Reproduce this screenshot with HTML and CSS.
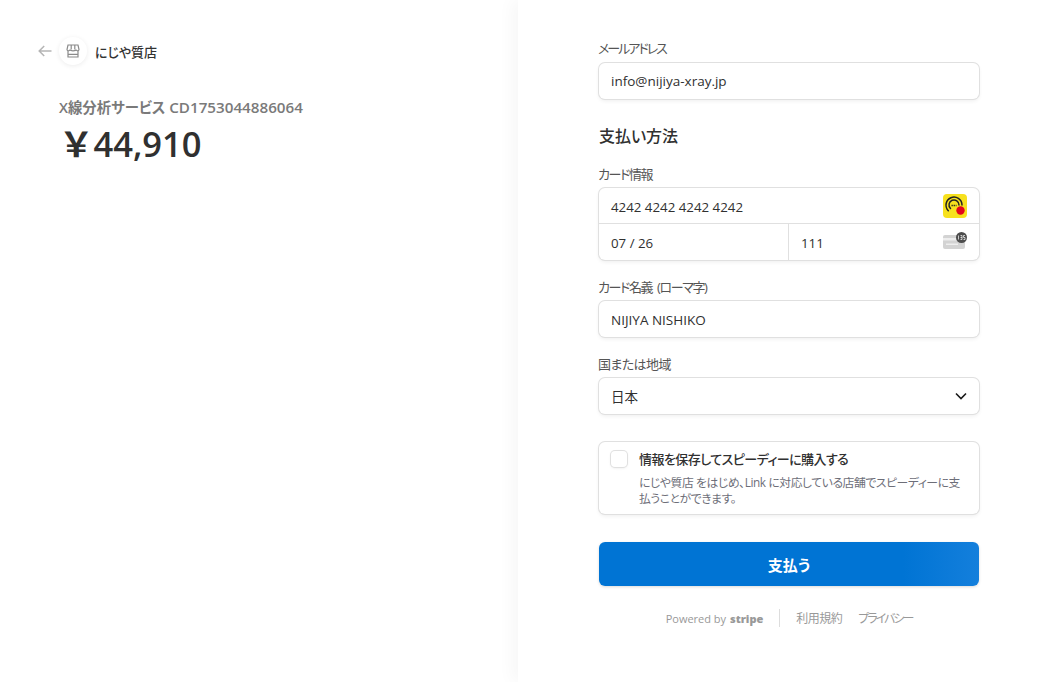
FILE: index.html
```html
<!DOCTYPE html>
<html lang="ja">
<head>
    <meta charset="UTF-8">
    <title>にじや質店</title>
    <link rel="stylesheet" href="styles.css">
</head>
<body>

    <div class="page">
        <!-- Order summary -->
        <div class="summary">
            <div class="merchant">
                <svg class="back" width="14" height="12" viewBox="0 0 14 12" fill="none" stroke="#b5b5b5" stroke-width="1.5">
                    <path d="M13.5 6H1.5M6.2 1L1.2 6l5 5"/>
                </svg>
                <div class="merchant-icon">
                    <svg width="14" height="14" viewBox="0 0 14 14" fill="none" stroke="#8a8a8a" stroke-width="1.2">
                        <path d="M2 1h10l1 4.500c0 1.600-2.700 1.800-3 0 0 1.800-6 1.800-6 0-.3 1.800-3 1.600-3 0z"/>
                        <path d="M5.200 1v4.500M8.800 1v4.500"/>
                        <path d="M2 7v6h10V7M2 10.300h10"/>
                    </svg>
                </div>
                <span class="merchant-name">にじや質店</span>
            </div>
            <div class="product">X線分析サービス <span class="product-code">CD1753044886064</span></div>
            <div class="price">￥44,910</div>
        </div>

        <!-- Payment form -->
        <div class="pay">
            <label class="label label-email">メールアドレス</label>
            <div class="input">info@nijiya-xray.jp</div>

            <h2 class="section-title">支払い方法</h2>

            <label class="label label-next label-kana">カード情報</label>
            <div class="card-box">
                <div class="card-number">
                    <span>4242 4242 4242 4242</span>
                    <svg class="brand" width="24" height="24" viewBox="0 0 24 24">
                        <rect width="24" height="24" rx="4" fill="#f7e11e"/>
                        <g fill="none" stroke="#222" stroke-width="1.500" stroke-linecap="round">
                            <path d="M5.300 16.700A8 8 0 1 1 19 11"/>
                            <path d="M7.500 14.500A5 5 0 1 1 16 11"/>
                        </g>
                        <path d="M8.500 11.500h5" stroke="#222" stroke-width="1.500" stroke-dasharray="1.300 .8"/>
                        <circle cx="17.500" cy="16.500" r="4.200" fill="#e3051b"/>
                    </svg>
                </div>
                <div class="card-row">
                    <div class="card-cell">07 / 26</div>
                    <div class="card-cell card-cvc">
                        <span>111</span>
                        <svg class="cvc-icon" width="24" height="17" viewBox="0 0 24 17">
                            <rect y="3" width="22" height="14" rx="2" fill="#d3d3d3"/>
                            <rect y="6" width="22" height="2.500" fill="#eee"/>
                            <rect x="3" y="11.500" width="12" height="1.500" fill="#eee"/>
                            <circle cx="18.500" cy="5.500" r="5.500" fill="#4d4d4d"/>
                            <path d="M15.500 3.500v4M17.500 3.500h1.500v4h-1.500M17.500 5.500h1.500M22 3.500h-1.500v2h1.500v2h-1.500" stroke="#fff" stroke-width=".7" fill="none"/>
                        </svg>
                    </div>
                </div>
            </div>

            <label class="label label-next label-kana label-name">カード名義 (ローマ字)</label>
            <div class="input input-latin">NIJIYA NISHIKO</div>

            <label class="label label-next label-kanji">国または地域</label>
            <div class="input select">
                <span>日本</span>
                <svg width="12" height="8" viewBox="0 0 12 8" fill="none" stroke="#1a1a1a" stroke-width="1.600">
                    <path d="M1 1.500l5 5 5-5"/>
                </svg>
            </div>

            <div class="save-box">
                <div class="checkbox"></div>
                <div class="save-text">
                    <div class="save-title">情報を保存してスピーディーに購入する</div>
                    <div class="save-desc">にじや質店 をはじめ、Link に対応している店舗でスピーディーに支払うことができます。</div>
                </div>
            </div>

            <button class="pay-button">支払う</button>

            <div class="footer">
                <span class="powered">Powered by <b>stripe</b></span>
                <span class="divider"></span>
                <span class="link link-terms">利用規約</span>
                <span class="link link-privacy">プライバシー</span>
            </div>
        </div>
    </div>

</body>
</html>
```

FILE: styles.css
```css
* {
    margin: 0;
    padding: 0;
    box-sizing: border-box;
    font-family: "Open Sans", "Noto Sans CJK JP", sans-serif;
    font-feature-settings: "palt";
}

html, body {
    height: 100%;
    overflow: hidden;
}

body {
    background: #fff;
    color: #1a1a1a;
}

.page {
    display: flex;
    height: 682px;
}

/* Left column */
.summary {
    width: 518px;
    padding: 35px 0 0 38px;
}

.merchant {
    display: flex;
    align-items: center;
    height: 32px;
}

.back {
    margin-right: 7px;
}

.merchant-icon {
    width: 28px;
    height: 28px;
    border-radius: 50%;
    background: #fff;
    box-shadow: 0 1px 5px rgba(0, 0, 0, 0.08);
    display: flex;
    align-items: center;
    justify-content: center;
    margin-right: 8px;
}

.merchant-name {
    font-size: 13px;
    font-weight: 500;
    color: #333;
}

.product {
    margin: 30px 0 0 21px;
    font-size: 14.400px;
    font-weight: 600;
    line-height: 20px;
    color: #7a7a7a;
}

.product-code {
    font-size: 15.200px;
}

.price {
    margin: 4px 0 0 21px;
    font-size: 34.500px;
    font-weight: 600;
    line-height: 44px;
    color: #303030;
    font-feature-settings: normal;
}

/* Right column */
.pay {
    flex: 1;
    padding: 39px 61px 0 81px;
    box-shadow: -6px 0 16px rgba(0, 0, 0, 0.035);
}

.label {
    display: block;
    font-size: 13px;
    line-height: 18px;
    margin: 0 0 6px -1px;
    color: #555;
}

.label-next {
    margin-top: 18px;
    margin-bottom: 5px;
}

.label-email {
    letter-spacing: -2px;
}

.label-kana {
    letter-spacing: -1.400px;
}

.label-name {
    word-spacing: 3px;
}

.label-kanji {
    letter-spacing: -0.600px;
}

.input {
    height: 36px;
    padding: 0 12px;
    display: flex;
    align-items: center;
    font-size: 13.500px;
    color: #303030;
    background: #fff;
    border-radius: 6px;
    box-shadow: 0 0 0 1px #e0e0e0, 0 2px 4px rgba(0, 0, 0, 0.07);
}

.input-latin {
    padding-top: 2px;
}

.select {
    justify-content: space-between;
}

.section-title {
    margin-top: 27px;
    font-size: 16px;
    font-weight: 500;
    line-height: 21px;
    color: #303030;
}

.card-box {
    height: 72px;
    border-radius: 6px;
    box-shadow: 0 0 0 1px #e0e0e0, 0 2px 4px rgba(0, 0, 0, 0.07);
    font-size: 13.300px;
    color: #303030;
}

.card-number {
    height: 36px;
    padding: 0 12px;
    display: flex;
    align-items: center;
    justify-content: space-between;
    border-bottom: 1px solid #e0e0e0;
}

.card-number span {
    padding-top: 2px;
}

.card-row {
    display: flex;
    height: 36px;
}

.card-cell {
    width: 189px;
    padding: 2px 12px 0;
    display: flex;
    align-items: center;
}

.card-cvc {
    flex: 1;
    justify-content: space-between;
    border-left: 1px solid #e0e0e0;
}

.cvc-icon {
    margin-bottom: 5px;
}

/* Save info box */
.save-box {
    display: flex;
    height: 72px;
    margin-top: 28px;
    padding: 8px 12px;
    border-radius: 6px;
    box-shadow: 0 0 0 1px #e0e0e0, 0 2px 4px rgba(0, 0, 0, 0.07);
}

.checkbox {
    flex: none;
    width: 16px;
    height: 16px;
    margin: 1px 12px 0 0;
    border-radius: 4px;
    background: #fff;
    box-shadow: 0 0 0 1px #e0e0e0, 0 1px 3px rgba(0, 0, 0, 0.1);
}

.save-title {
    font-size: 13px;
    font-weight: 500;
    line-height: 18px;
    letter-spacing: -0.550px;
    color: #303030;
}

.save-desc {
    margin-top: 6px;
    font-size: 11.800px;
    line-height: 16px;
    letter-spacing: -0.400px;
    color: #6d6e78;
}

.pay-button {
    display: block;
    width: 380px;
    height: 44px;
    margin-top: 28px;
    border: none;
    border-radius: 6px;
    background: linear-gradient(to right, #0074d4 80%, #147fdc);
    box-shadow: 0 1px 3px rgba(0, 0, 0, 0.15);
    color: #fff;
    font-size: 15px;
    font-weight: 700;
}

.footer {
    display: flex;
    align-items: center;
    justify-content: center;
    gap: 16px;
    margin-top: 23px;
    font-size: 12px;
    color: #999;
}

.powered {
    font-size: 11px;
}

.powered b {
    font-size: 11px;
    font-weight: 800;
    margin-left: 1px;
}

.divider {
    width: 1px;
    height: 18px;
    background: #ddd;
}

.link-terms {
    letter-spacing: -0.500px;
}

.link-privacy {
    letter-spacing: -2px;
}
```
